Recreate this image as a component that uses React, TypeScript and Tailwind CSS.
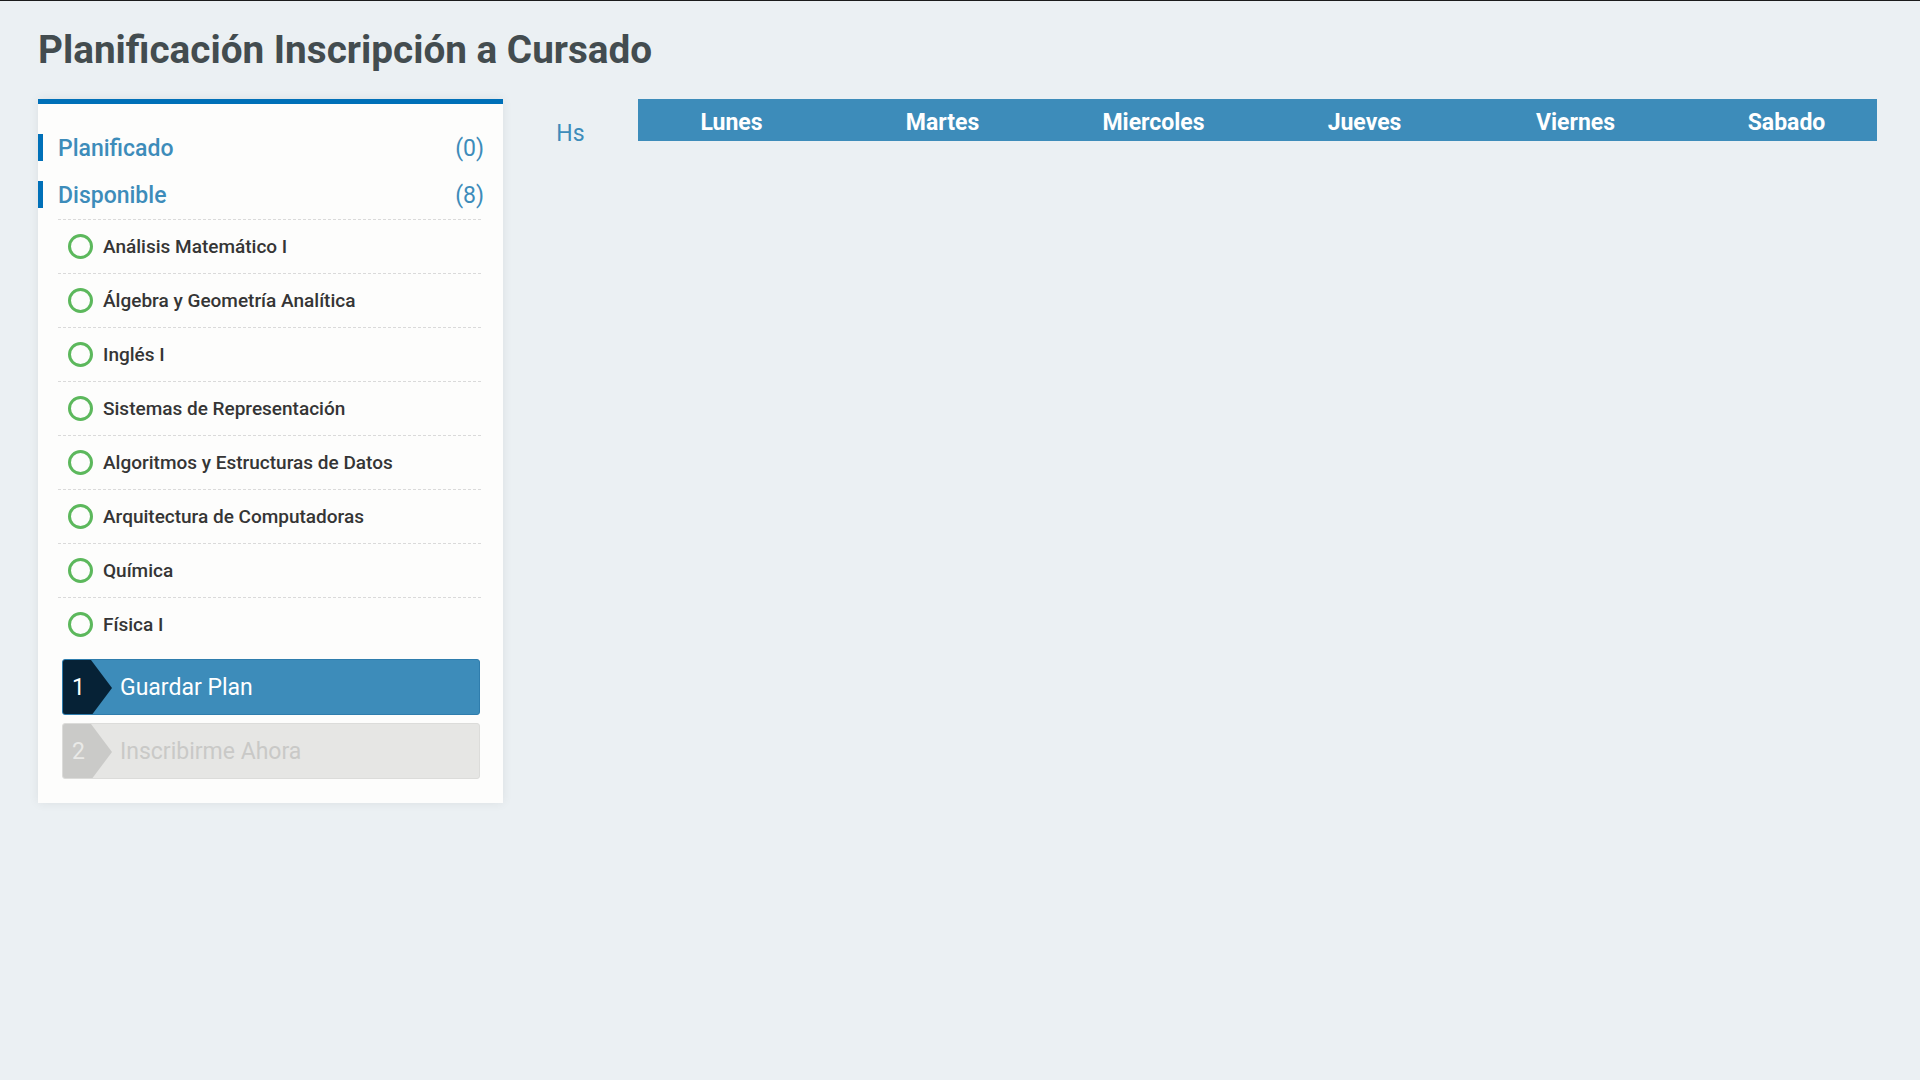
const materias = [
  'Análisis Matemático I',
  'Álgebra y Geometría Analítica',
  'Inglés I',
  'Sistemas de Representación',
  'Algoritmos y Estructuras de Datos',
  'Arquitectura de Computadoras',
  'Química',
  'Física I',
]

const dias = ['Lunes', 'Martes', 'Miercoles', 'Jueves', 'Viernes', 'Sabado']

function Chevron({ color }: { color: string }) {
  return (
    <svg width="49" height="56" viewBox="0 0 49 56" className="absolute left-0 top-0">
      <polygon points="0,0 28,0 49,28 28,56 0,56" fill={color} />
    </svg>
  )
}

function StepButton({ n, label, active }: { n: number; label: string; active?: boolean }) {
  return (
    <button
      className={
        active
          ? 'relative flex h-[56px] w-full items-center overflow-hidden rounded-[3px] border border-[#2f7dad] bg-[#3d8cba] pt-[2px] text-left text-white'
          : 'relative flex h-[56px] w-full items-center overflow-hidden rounded-[3px] border border-[#dcdcda] bg-[#e6e6e4] pt-[2px] text-left text-[#c9c9c7]'
      }
    >
      <Chevron color={active ? '#062236' : '#cacac8'} />
      <span
        className={
          active
            ? 'relative w-[31px] text-center text-[23px] text-white'
            : 'relative w-[31px] text-center text-[23px] text-[#e9e9e7]'
        }
      >
        {n}
      </span>
      <span className="relative ml-[26px] text-[23px]">{label}</span>
    </button>
  )
}

export default function App() {
  return (
    <div className="min-h-screen border-t border-[#1b1b1b] bg-[#ebf0f3] font-['Roboto',sans-serif]">
      <div className="pl-[38px] pr-[43px] pt-[26px]">
        <h1 className="text-[38.7px] font-bold leading-[46px] text-[#434c4f]">
          Planificación Inscripción a Cursado
        </h1>

        <div className="mt-[26px] flex items-start">
          <aside className="w-[465px] shrink-0 border-t-[5px] border-[#0070b8] bg-[#fdfdfc] pb-[24px] pt-[30px] shadow-[0_0_10px_rgba(0,0,0,0.07)]">
            <div className="flex h-[27px] items-center justify-between border-l-[5px] border-[#0070b8] pl-[15px] pr-[19px] pt-[3px] text-[23px] text-[#3d8cba]">
              <span className="font-medium">Planificado</span>
              <span>(0)</span>
            </div>
            <div className="mt-[20px] flex h-[27px] items-center justify-between border-l-[5px] border-[#0070b8] pl-[15px] pr-[19px] pt-[3px] text-[23px] text-[#3d8cba]">
              <span className="font-medium">Disponible</span>
              <span>(8)</span>
            </div>

            <ul className="ml-[20px] mr-[22px] mt-[11px]">
              {materias.map((m) => (
                <li
                  key={m}
                  className="flex h-[54px] items-center border-t border-dashed border-[#dadada] pl-[10px] last:h-[53px]"
                >
                  <span className="h-[25px] w-[25px] rounded-full border-[3px] border-[#5cb85c]" />
                  <span className="ml-[10px] pt-[2px] text-[19px] font-medium text-[#353535]">{m}</span>
                </li>
              ))}
            </ul>

            <div className="mx-[23px] mt-[9px] flex flex-col gap-[8px] pl-px">
              <StepButton n={1} label="Guardar Plan" active />
              <StepButton n={2} label="Inscribirme Ahora" />
            </div>
          </aside>

          <div className="flex min-w-0 flex-1 items-start">
            <div className="w-[135px] shrink-0 pt-[18px] text-center text-[23px] text-[#3d8cba]">Hs</div>
            <div className="h-[42px] min-w-0 flex-1 bg-[#3d8cba]">
              <div className="-ml-[12px] grid h-full w-[1266px] grid-cols-6 items-center pt-[7px]">
                {dias.map((d) => (
                  <div key={d} className="text-center text-[23px] font-bold text-white">
                    {d}
                  </div>
                ))}
              </div>
            </div>
          </div>
        </div>
      </div>
    </div>
  )
}
